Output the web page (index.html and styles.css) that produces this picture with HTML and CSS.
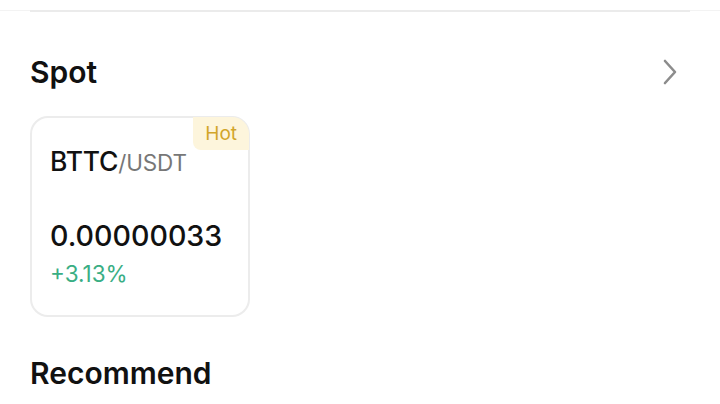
FILE: index.html
```html
<!DOCTYPE html>
<html lang="en">
  <head>
    <meta charset="UTF-8" />
    <meta name="viewport" content="width=device-width, initial-scale=1.0" />
    <title>Markets</title>
    <link rel="stylesheet" href="styles.css">
  </head>
  <body>
    <div class="divider"><div class="divider-inner"></div></div>

    <div class="container">
      <div class="section-head">
        <h2>Spot</h2>
        <svg class="chevron" width="16" height="26" viewBox="0 0 16 26">
          <path d="M3 2 L13 13 L3 24" fill="none" stroke="#8c8c8c" stroke-width="2.6" stroke-linecap="round" stroke-linejoin="round" />
        </svg>
      </div>

      <div class="card">
        <span class="badge">Hot</span>
        <div class="pair">BTTC<span class="quote">/USDT</span></div>
        <div class="price">0.00000033</div>
        <div class="change">+3.13%</div>
      </div>

      <h2 class="recommend">Recommend</h2>
    </div>
  </body>
</html>
```

FILE: styles.css
```css
body {
  font-family: Inter, Lato, sans-serif;
  background-color: #fff;
  color: #111;
  margin: 0;
  padding: 0;
}
.divider {
  margin-top: 11px;
  height: 1px;
  background-color: #f3f3f3;
}
.divider-inner {
  margin: -1px 30px 0;
  height: 2px;
  background-color: #ebebeb;
}
.container {
  padding: 0 30px;
}
.section-head {
  display: flex;
  align-items: center;
  justify-content: space-between;
  margin-top: 43px;
  padding-right: 12px;
}
h2 {
  font-size: 30px;
  font-weight: 600;
  margin: 0;
  line-height: 36px;
}
.card {
  position: relative;
  width: 216px;
  height: 197px;
  margin-top: 26px;
  border: 2px solid #ececec;
  border-radius: 18px;
}
.badge {
  position: absolute;
  top: -1px;
  right: -1px;
  background-color: #fdf5dc;
  color: #d2a52a;
  font-size: 19px;
  line-height: 26px;
  padding: 4px 12px 3px 12px;
  border-radius: 0 17px 0 8px;
}
.pair {
  font-size: 26.5px;
  font-weight: 500;
  margin: 27px 0 0 18px;
  line-height: 32px;
  letter-spacing: -0.2px;
}
.quote {
  font-size: 22.5px;
  color: #777;
  font-weight: 400;
}
.price {
  font-size: 28.6px;
  font-weight: 500;
  margin: 39px 0 0 18px;
  line-height: 36px;
}
.change {
  font-size: 22.5px;
  color: #3aae84;
  margin: 6px 0 0 18px;
}
.recommend {
  margin-top: 38px;
}
```
